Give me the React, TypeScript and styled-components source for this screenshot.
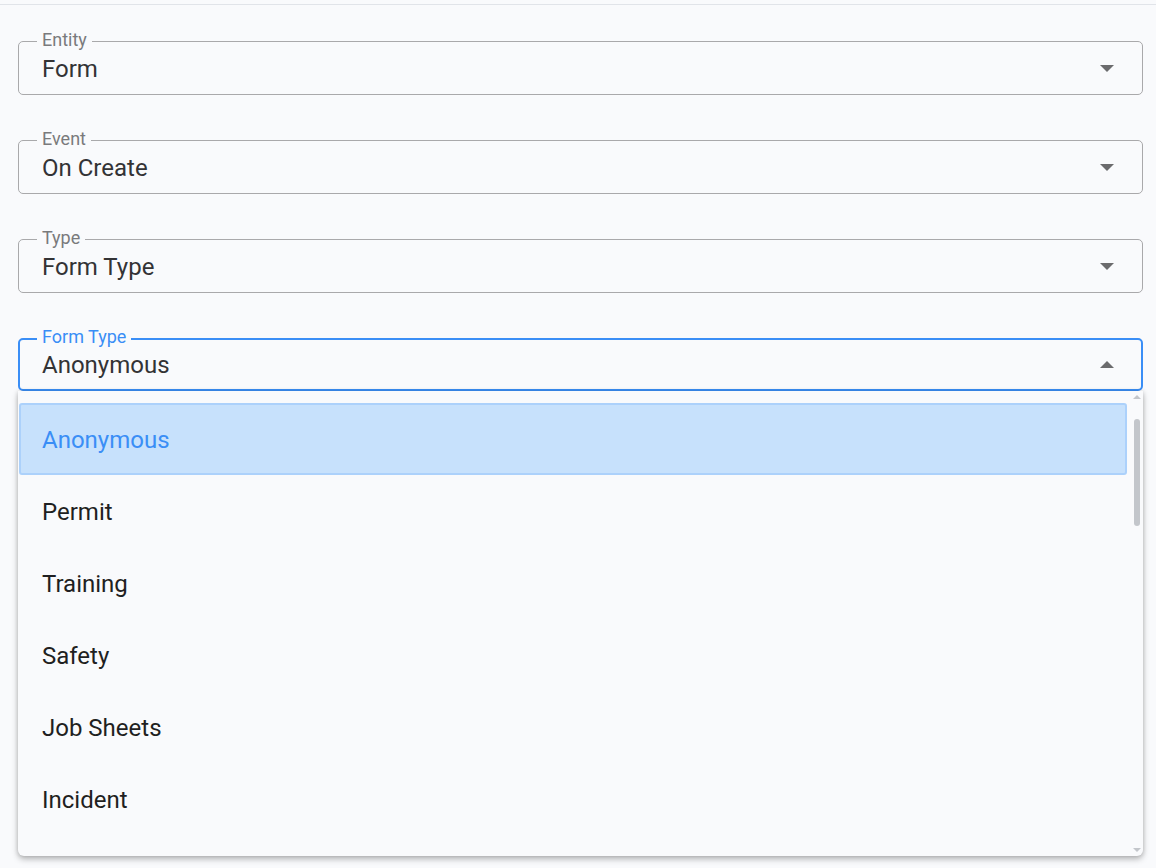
import * as React from "react";
import {FunctionComponent, useState} from "react";
import styled, {createGlobalStyle, css} from "styled-components";

const Global = createGlobalStyle`
  html, body {
    margin: 0;
    padding: 0;
    background: #f9fafc;
    font-family: Roboto, "Noto Sans", Arial, sans-serif;
    overflow: hidden;
  }
`;

const Page = styled.div`
  width: 1156px;
  height: 868px;
  background: #f9fafc;
  box-sizing: border-box;
  padding-top: 4px;
`;

const TopRule = styled.div`
  height: 1px;
  background: #e1e4e9;
`;

const Form = styled.div`
  display: flex;
  flex-direction: column;
  gap: 45px;
  padding: 36px 13px 0 18px;
`;

const Field = styled.div`
  position: relative;
`;

const Box = styled.div<{ $focused?: boolean }>`
  position: relative;
  display: flex;
  align-items: center;
  box-sizing: border-box;
  height: 54px;
  padding: 0 28px 0 23px;
  border: 1px solid #a9a9ab;
  border-radius: 5px;
  cursor: pointer;
  ${p => p.$focused && css`
    border: 2px solid #3a8ef6;
    height: 53px;
    padding: 0 27px 0 22px;
  `}
`;

const Legend = styled.span<{ $focused?: boolean }>`
  position: absolute;
  top: -12px;
  left: 18px;
  padding: 0 5px;
  background: #f9fafc;
  font-size: 18px;
  line-height: 20px;
  color: ${p => (p.$focused ? "#3a8ef6" : "#7a7a7c")};
  ${p => p.$focused && css`
    top: -13px;
    left: 17px;
  `}
`;

const Value = styled.span`
  flex: 1;
  font-size: 24px;
  color: #333335;
  padding-top: 1px;
`;

const Caret = styled.span<{ $open?: boolean }>`
  width: 0;
  height: 0;
  border-left: 7.5px solid transparent;
  border-right: 7.5px solid transparent;
  ${p => p.$open
    ? css`border-bottom: 7px solid #6b6b6d;`
    : css`border-top: 7px solid #6b6b6d;`}
`;

const Menu = styled.div`
  position: absolute;
  top: 53px;
  left: 0;
  right: 0;
  height: 465px;
  display: flex;
  background: #f9fafc;
  border-radius: 0 0 6px 6px;
  box-shadow: 0 3px 6px rgba(0, 0, 0, 0.28), 0 0 4px rgba(0, 0, 0, 0.12);
  overflow: hidden;
  z-index: 2;
`;

const List = styled.ul`
  flex: 1;
  margin: 0;
  padding: 12px 0 0 1px;
  list-style: none;
  overflow: hidden;
`;

const Option = styled.li<{ $selected?: boolean }>`
  display: flex;
  align-items: center;
  box-sizing: border-box;
  height: 72px;
  padding: 2px 0 0 21px;
  font-size: 24px;
  color: #1f1f21;
  border: 2px solid transparent;
  border-radius: 3px;
  ${p => p.$selected && css`
    background: #c7e1fc;
    border-color: #acd1fb;
    color: #3a8ef6;
  `}
`;

const Rail = styled.div`
  flex: 0 0 16px;
  display: flex;
  flex-direction: column;
  align-items: flex-end;
  padding: 4px 1px 4px 0;
  box-sizing: border-box;
`;

const RailArrow = styled.span<{ $up?: boolean }>`
  width: 0;
  height: 0;
  margin-right: 1px;
  border-left: 4px solid transparent;
  border-right: 4px solid transparent;
  ${p => p.$up
    ? css`border-bottom: 4px solid #c3c6cb;`
    : css`border-top: 4px solid #c3c6cb;`}
`;

const Track = styled.div`
  flex: 1;
  display: flex;
  justify-content: flex-end;
  padding: 20px 2px 0 0;
`;

const Thumb = styled.div`
  width: 6px;
  height: 107px;
  border-radius: 3px;
  background: #c3c6cb;
`;

type SelectProps = {
  label: string;
  value: string;
  options?: string[];
  open?: boolean;
};

const Select: FunctionComponent<SelectProps> = ({label, value, options, open}) => (
  <Field>
    <Box $focused={open}>
      <Legend $focused={open}>{label}</Legend>
      <Value>{value}</Value>
      <Caret $open={open} />
    </Box>
    {open && options ? (
      <Menu>
        <List>
          {options.map(o => (
            <Option key={o} $selected={o === value}>{o}</Option>
          ))}
        </List>
        <Rail>
          <RailArrow $up />
          <Track><Thumb /></Track>
          <RailArrow />
        </Rail>
      </Menu>
    ) : null}
  </Field>
);

const formTypes = ["Anonymous", "Permit", "Training", "Safety", "Job Sheets", "Incident"];

export default function App() {
  const [formType] = useState("Anonymous");
  return (
    <Page>
      <Global />
      <TopRule />
      <Form>
        <Select label="Entity" value="Form" />
        <Select label="Event" value="On Create" />
        <Select label="Type" value="Form Type" />
        <Select label="Form Type" value={formType} options={formTypes} open />
      </Form>
    </Page>
  );
}
